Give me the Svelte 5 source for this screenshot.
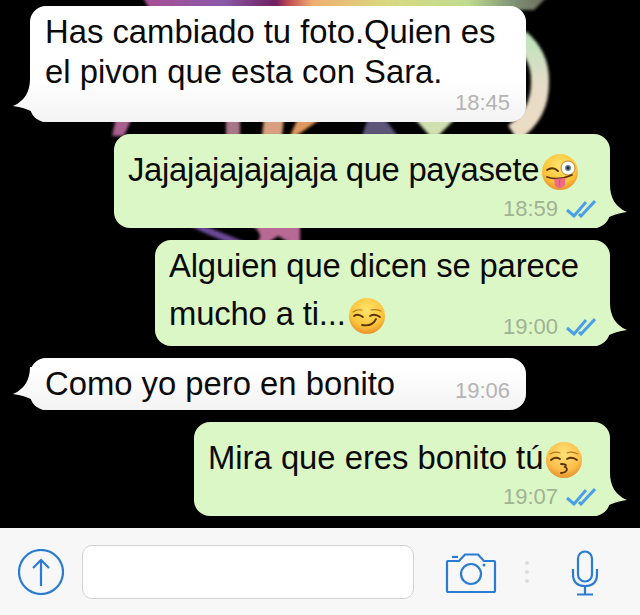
<script>
	const messages = [
		{ id: 1, side: 'in', kind: 'two-line', size: 'wide', lines: ['Has cambiado tu foto.Quien es', 'el pivon que esta con Sara.'], time: '18:45' },
		{ id: 2, side: 'out', kind: 'one-line', size: 'wide', lines: ['Jajajajajajajaja que payasete'], emoji: 'tongue', time: '18:59' },
		{ id: 3, side: 'out', kind: 'two-tight', size: 'mid', lines: ['Alguien que dicen se parece', 'mucho a ti...'], emoji: 'smirk', time: '19:00' },
		{ id: 4, side: 'in', kind: 'short', size: 'wide', lines: ['Como yo pero en bonito'], time: '19:06' },
		{ id: 5, side: 'out', kind: 'one-line', size: 'narrow', lines: ['Mira que eres bonito tú'], emoji: 'kiss', time: '19:07' }
	];
</script>

{#snippet face(emoji)}
	<svg class="emoji" viewBox="0 0 38 38" aria-hidden="true">
		<defs>
			<radialGradient id="skin-{emoji}" cx="0.5" cy="0.32" r="0.72">
				<stop offset="0" stop-color={emoji === 'kiss' ? '#ffe27a' : '#ffe36a'} />
				<stop offset="0.65" stop-color={emoji === 'kiss' ? '#fcbe4a' : '#fcc43a'} />
				<stop offset="1" stop-color="#e58a2a" />
			</radialGradient>
		</defs>
		<circle cx="19" cy="19" r="18" fill="url(#skin-{emoji})" />
		{#if emoji === 'tongue'}
			<path d="M6 17 Q12 13 17 18" class="feature" />
			<circle cx="27" cy="15" r="7" fill="#fff" stroke="#a8701c" stroke-width="0.8" />
			<circle cx="27" cy="15" r="3" fill="#5f7f9a" />
			<circle cx="27" cy="15" r="1.4" fill="#222" />
			<path d="M6 24 Q18 28 31 22" class="feature" />
			<path d="M13 26 L24 25 L24 32 Q19 38 14 33 Z" fill="#f06a86" />
			<path d="M18.5 27 L18.8 33" stroke="#c84a68" stroke-width="0.8" />
		{:else if emoji === 'smirk'}
			<path d="M5 15 Q9 12 14 13" class="feature thin" />
			<path d="M23 13 Q28 12 33 14" class="feature thin" />
			<path d="M6 19 Q10 16 15 20" class="feature" />
			<path d="M22 19 Q27 16 32 20" class="feature" />
			<path d="M14 28 Q24 30 28 22" class="feature" />
		{:else}
			<path d="M5 13 Q10 10 15 12" class="feature thin" />
			<path d="M22 12 Q27 10 33 13" class="feature thin" />
			<path d="M6 19 Q10 15 15 18" class="feature" />
			<path d="M22 18 Q27 15 32 19" class="feature" />
			<path d="M16 23 Q23 23 20 26 Q24 28 20 31 Q18 32 16 32" class="feature" />
		{/if}
	</svg>
{/snippet}

<div class="screen">
	<main class="chat">
		<svg class="wallpaper" viewBox="0 0 640 528" aria-hidden="true">
			<defs>
				<linearGradient id="band" x1="0" x2="1" y1="0" y2="0">
					<stop offset="0" stop-color="#a84f94" />
					<stop offset="0.2" stop-color="#8a5aa8" />
					<stop offset="0.33" stop-color="#6d1f5f" />
					<stop offset="0.36" stop-color="#c04a50" />
					<stop offset="0.42" stop-color="#f0b070" />
					<stop offset="0.6" stop-color="#d8d880" />
					<stop offset="0.8" stop-color="#c0dc90" />
					<stop offset="0.92" stop-color="#7c9074" />
					<stop offset="1" stop-color="#6c6858" />
				</linearGradient>
				<linearGradient id="ring" x1="0" x2="0" y1="0" y2="1">
					<stop offset="0" stop-color="#bfe4bc" />
					<stop offset="0.5" stop-color="#e6dcc8" />
					<stop offset="1" stop-color="#ecdcc4" />
				</linearGradient>
				<linearGradient id="tail-in" x1="0" x2="0" y1="0" y2="1">
					<stop offset="0" stop-color="#fff" />
					<stop offset="1" stop-color="#f3f3f3" />
				</linearGradient>
				<filter id="soft"><feGaussianBlur stdDeviation="1.6" /></filter>
			</defs>
			<g filter="url(#soft)">
				<path d="M142 -4 H548 L534 10 H150 Z" fill="url(#band)" />
				<path d="M520 38 Q540 55 540 80 Q541 115 513 133" fill="none" stroke="url(#ring)" stroke-width="18" />
				<path d="M116 118 L112 136 H124 L132 118 Z" fill="#a8608f" />
				<path d="M226 118 H240 V136 H226 Z" fill="#a87688" />
				<path d="M264 118 H284 L282 136 H262 Z" fill="#d8a080" />
				<path d="M298 118 H322 L296 136 H290 Z" fill="#e09860" />
				<path d="M368 118 H384 L398 136 H362 Z" fill="#5c5478" />
				<path d="M414 118 H456 L438 136 H430 Z" fill="#d0e0b0" />
				<path d="M186 224 Q210 236 232 244 L250 244 Q215 230 200 224 Z" fill="#6c4a96" />
				<path d="M250 224 H300 V244 H292 L278 236 L266 244 H254 Q268 236 250 224 Z" fill="#b86a94" />
			</g>
		</svg>

		{#each messages as message (message.id)}
			<article class="bubble {message.side} {message.kind} {message.size}">
				<svg class="tail" viewBox="0 0 32 43" aria-hidden="true">
					<path d="M17 0 C17 12 12 22 0 27 C8 28 14 30 20 33 C24 38 28 43 32 43 L32 0 Z" />
				</svg>
				<p class="text">
					{#each message.lines as line, i}
						<span class="line">{line}{#if message.emoji && i === message.lines.length - 1}{@render face(message.emoji)}{/if}</span>
					{/each}
				</p>
				<div class="meta">
					<time>{message.time}</time>
					{#if message.side === 'out'}
						<svg class="ticks" viewBox="0 0 30 18" aria-hidden="true">
							<path d="M1 10 L8 16 L20 2" />
							<path d="M13 14 L15 16 L29 1" />
						</svg>
					{/if}
				</div>
			</article>
		{/each}
	</main>

	<footer class="composer">
		<svg class="attach" viewBox="0 0 46 46" aria-hidden="true">
			<circle cx="23" cy="23" r="22" />
			<path d="M23 37 V11 M15 19 L23 11 L31 19" />
		</svg>
		<div class="field"></div>
		<svg class="camera" viewBox="0 0 52 40" aria-hidden="true">
			<path d="M3 8 H14 L20 1.5 H33 L39 8 H49 Q50 8 50 9 V38 Q50 39 49 39 H3 Q2 39 2 38 V9 Q2 8 3 8 Z" />
			<circle cx="26" cy="21" r="10" />
			<path d="M7 4 H13" />
			<circle class="dot" cx="39" cy="12" r="1.5" />
		</svg>
		<div class="dots"><i></i><i></i><i></i></div>
		<svg class="mic" viewBox="0 0 28 46" aria-hidden="true">
			<rect x="7" y="1.5" width="14" height="30" rx="7" />
			<path d="M2 19 V24 Q2 36 14 36 Q26 36 26 24 V19 M14 36 V44 M6 44.5 H22" />
		</svg>
	</footer>
</div>

<style>
	:global(body) {
		margin: 0;
	}

	.screen {
		width: 640px;
		height: 615px;
		display: flex;
		flex-direction: column;
		background: #000;
		font-family: 'Liberation Sans', Arial, sans-serif;
		overflow: hidden;
	}

	.chat {
		position: relative;
		flex: 1;
		display: flex;
		flex-direction: column;
		gap: 12px;
		padding-top: 6px;
		box-sizing: border-box;
	}

	.wallpaper {
		position: absolute;
		inset: 0;
		width: 100%;
		height: 100%;
	}

	.bubble {
		position: relative;
		display: flex;
		flex-direction: column;
		box-sizing: border-box;
		border-radius: 16px;
		padding: 0 14px 8px 15px;
	}

	.bubble.wide {
		width: 496px;
	}

	.bubble.mid {
		width: 455px;
	}

	.bubble.narrow {
		width: 416px;
	}

	.bubble.in {
		margin-left: 30px;
		background: linear-gradient(#fff calc(100% - 43px), #f3f3f3);
	}

	.bubble.out {
		align-self: flex-end;
		margin-right: 30px;
		padding-left: 14px;
		background: #dcf7c6;
	}

	.tail {
		position: absolute;
		bottom: 0;
		left: -17px;
		width: 32px;
		height: 43px;
		fill: url(#tail-in);
	}

	.bubble.out .tail {
		left: auto;
		right: -17px;
		transform: scaleX(-1);
		fill: #dcf7c6;
	}

	.text {
		position: relative;
		margin: 0;
		font-size: 32.8px;
		line-height: 40px;
		color: #0a0a0a;
	}

	.out.wide .text {
		letter-spacing: -0.28px;
	}

	.out.mid .text {
		letter-spacing: -0.15px;
	}

	.line {
		display: block;
		white-space: nowrap;
	}

	.emoji {
		display: inline-block;
		width: 38px;
		height: 38px;
		margin: -4px 0 -4px 2px;
		vertical-align: middle;
	}

	.feature {
		fill: none;
		stroke: #5a3208;
		stroke-width: 1.8;
		stroke-linecap: round;
	}

	.feature.thin {
		stroke: #b87a1c;
		stroke-width: 1.2;
	}

	.meta {
		position: relative;
		align-self: flex-end;
		display: flex;
		align-items: center;
		gap: 8px;
		height: 22px;
		font-size: 22px;
		line-height: 22px;
		color: #b4b4b4;
	}

	.bubble.in .meta {
		margin-right: 2px;
	}

	.bubble.out .meta {
		color: #9fb394;
	}

	.ticks {
		width: 30px;
		height: 18px;
		fill: none;
		stroke: #4a9fe8;
		stroke-width: 3;
	}

	.two-line {
		padding-top: 6px;
	}

	.one-line {
		padding-top: 16px;
	}

	.one-line .meta {
		margin-top: 8px;
	}

	.two-tight {
		padding-top: 2px;
	}

	.two-tight .text {
		line-height: 48px;
	}

	.two-tight .meta {
		margin-top: -22px;
	}

	.short {
		padding-top: 6px;
	}

	.short .meta {
		margin-top: -24px;
	}

	.composer {
		height: 87px;
		flex-shrink: 0;
		display: flex;
		align-items: center;
		padding-left: 18px;
		box-sizing: border-box;
		background: #f7f7f7;
	}

	.composer svg {
		fill: none;
		stroke: #2a7cd3;
		stroke-width: 2.2;
		flex-shrink: 0;
	}

	.attach {
		width: 46px;
		height: 46px;
	}

	.field {
		width: 332px;
		height: 54px;
		margin-left: 18px;
		box-sizing: border-box;
		background: #fff;
		border: 1px solid #d2d2d2;
		border-radius: 10px;
	}

	.camera {
		width: 52px;
		height: 40px;
		margin-left: 31px;
		margin-bottom: -2px;
	}

	.camera .dot {
		fill: #2a7cd3;
		stroke: none;
	}

	.dots {
		display: flex;
		flex-direction: column;
		gap: 5px;
		margin-left: 28px;
	}

	.dots i {
		width: 4px;
		height: 4px;
		border-radius: 50%;
		background: #dcdcdc;
	}

	.mic {
		width: 28px;
		height: 46px;
		margin-left: 42px;
		margin-top: 2px;
	}
</style>
